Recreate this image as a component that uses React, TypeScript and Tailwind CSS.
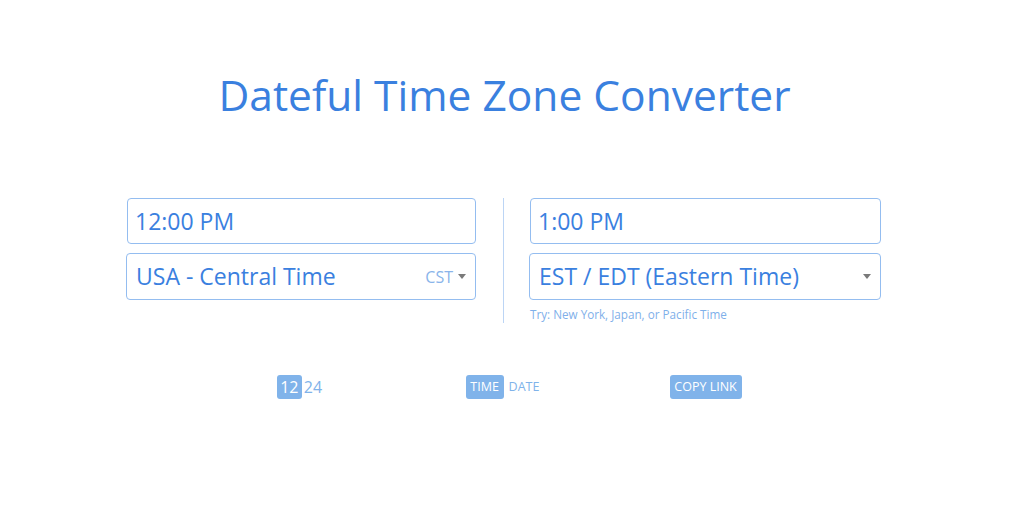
import React from "react";

function Caret() {
  return (
    <svg width="8" height="5" viewBox="0 0 8 5" className="shrink-0">
      <path d="M0 0 L8 0 L4 5 Z" fill="#7a7a7a" />
    </svg>
  );
}

export default function App() {
  return (
    <div className="min-h-[508px] w-[1009px] bg-white" style={{ fontFamily: '"Open Sans", sans-serif' }}>
      <h1 className="pt-[70px] text-center text-[42.5px] leading-[50px] font-normal text-[#3a80df]">
        Dateful Time Zone Converter
      </h1>
      <div className="mt-[78px] flex justify-center pr-[2px]">
        <div className="flex w-[350px] flex-col gap-[9px] pl-[1px]">
          <div className="flex h-[46px] items-center rounded-[4px] border border-[#94bdf0] px-[7px] text-[23px] text-[#3a80df]">
            12:00 PM
          </div>
          <div className="-ml-[1px] flex h-[47px] items-center rounded-[4px] border border-[#94bdf0] pl-[9px] pr-[9px] text-[23px] text-[#3a80df]">
            <span className="flex-1">USA - Central Time</span>
            <span className="mr-[5px] text-[16px] text-[#8ab4ea]">CST</span>
            <Caret />
          </div>
        </div>
        <div className="ml-[27px] mr-[26px] h-[125px] w-[1px] bg-[#bcd5f5]" />
        <div className="flex w-[351px] flex-col">
          <div className="flex h-[46px] items-center rounded-[4px] border border-[#94bdf0] px-[7px] text-[23px] text-[#3a80df]">
            1:00 PM
          </div>
          <div className="-ml-[1px] mt-[9px] flex h-[47px] items-center rounded-[4px] border border-[#94bdf0] pl-[9px] pr-[9px] text-[23px] text-[#3a80df]">
            <span className="flex-1">EST / EDT (Eastern Time)</span>
            <Caret />
          </div>
          <div className="mt-[6px] text-[11.7px] leading-[16px] text-[#7fb0ea]">
            Try: New York, Japan, or Pacific Time
          </div>
        </div>
      </div>
      <div className="mt-[52px] flex justify-center pr-[4px]">
        <div className="flex w-[203px] justify-center">
          <div className="flex items-center">
            <span className="flex h-[24px] w-[25px] items-center justify-center rounded-[3px] bg-[#80b3ea] text-[16px] text-white">12</span>
            <span className="ml-[2px] text-[16px] text-[#80b3ea]">24</span>
          </div>
        </div>
        <div className="flex w-[203px] justify-center">
          <div className="flex items-center">
            <span className="flex h-[24px] w-[38px] items-center justify-center rounded-[3px] bg-[#80b3ea] text-[12.5px] text-white">TIME</span>
            <span className="ml-[5px] text-[12.5px] text-[#80b3ea]">DATE</span>
          </div>
        </div>
        <div className="flex w-[203px] justify-center">
          <span className="flex h-[24px] w-[72px] items-center justify-center rounded-[3px] bg-[#80b3ea] text-[12.5px] text-white">COPY LINK</span>
        </div>
      </div>
    </div>
  );
}
